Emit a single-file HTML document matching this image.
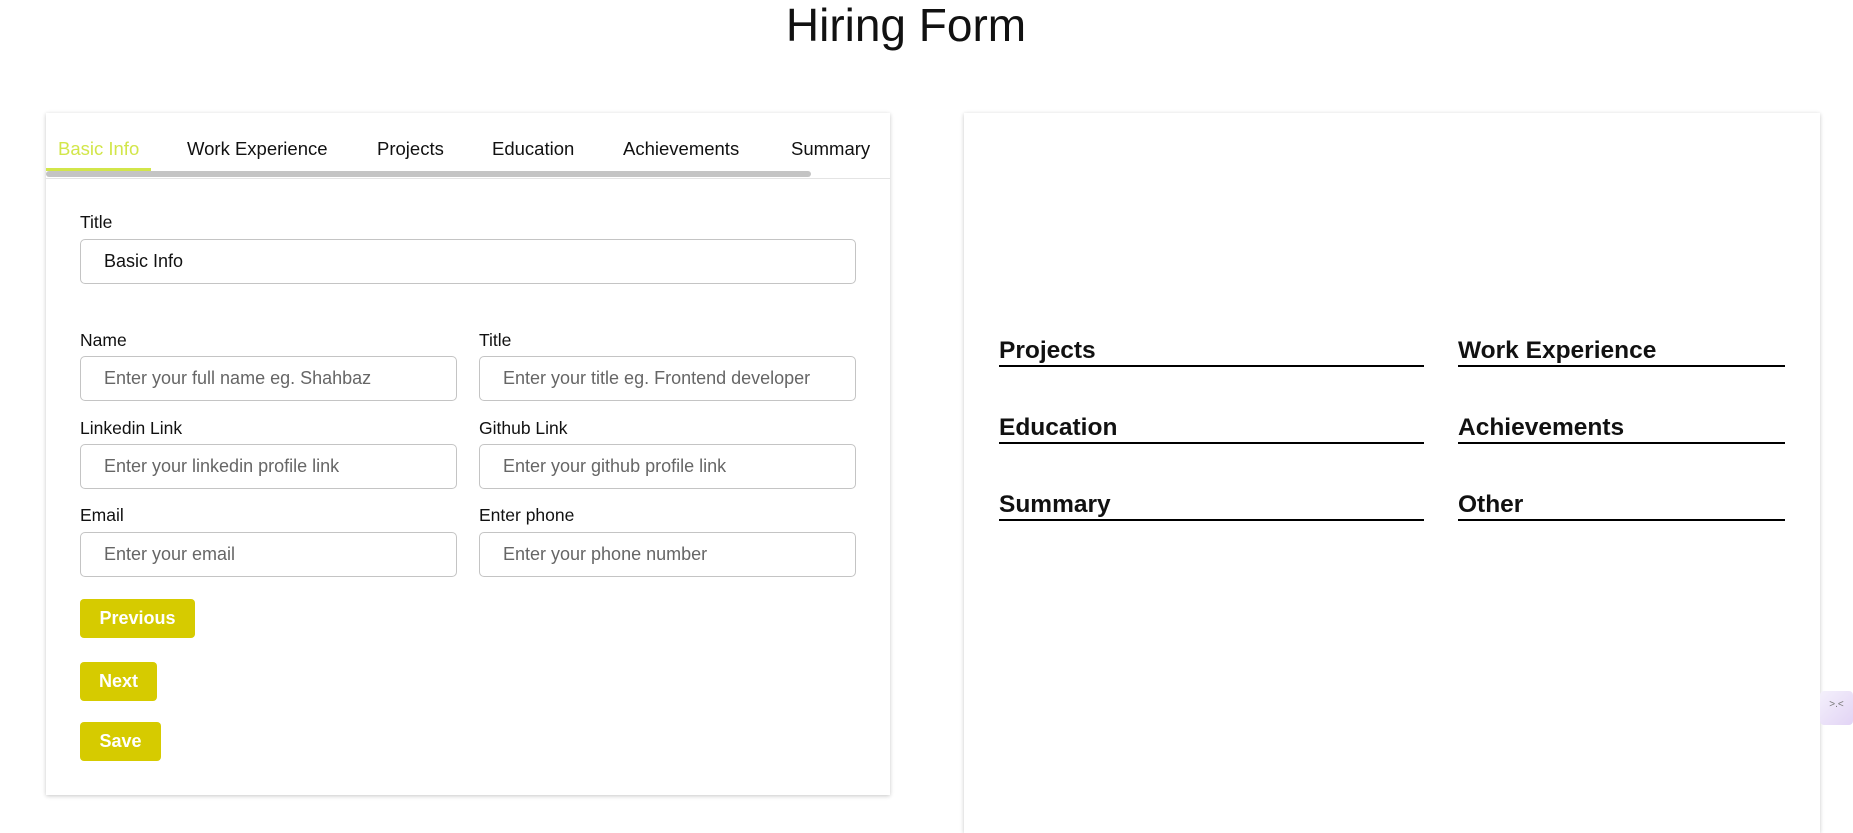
<!DOCTYPE html>
<html><head><meta charset="utf-8"><style>
*{box-sizing:border-box;margin:0;padding:0}
body{width:1853px;height:817px;overflow:hidden;background:#fff;font-family:"Liberation Sans",sans-serif;color:#111;position:relative}
.abs{position:absolute}
h1{position:absolute;left:0;width:1812px;text-align:center;top:-2px;font-weight:400;font-size:46px;color:#111}
.card{position:absolute;background:#fff;box-shadow:0 1px 4px rgba(0,0,0,.22)}
.tab{position:absolute;top:138px;font-size:18.5px;white-space:nowrap}
.lbl{position:absolute;font-size:17.5px;white-space:nowrap}
.inp{position:absolute;border:1px solid #c4c4c4;border-radius:5px;height:45px;font-size:18px;color:#666;padding-left:23px;line-height:43px;white-space:nowrap}
.btn{position:absolute;left:80px;background:#d6cb00;color:#fff;font-weight:bold;font-size:18px;border-radius:4px;text-align:center;line-height:39px;height:39px}
.h{position:absolute;font-weight:bold;font-size:24.5px;border-bottom:2px solid #000;height:42px;line-height:51px}
</style></head><body>
<h1>Hiring Form</h1>
<div class="card" style="left:46px;top:113px;width:844px;height:682px"></div>
<div class="tab" style="left:58px;color:#d2e64a">Basic Info</div>
<div class="tab" style="left:187px">Work Experience</div>
<div class="tab" style="left:377px">Projects</div>
<div class="tab" style="left:492px">Education</div>
<div class="tab" style="left:623px">Achievements</div>
<div class="tab" style="left:791px">Summary</div>
<div class="abs" style="left:46px;top:168px;width:105px;height:3px;background:#d2e64a"></div>
<div class="abs" style="left:46px;top:171px;width:765px;height:6px;background:#c4c4c4;border-radius:3px"></div>
<div class="abs" style="left:46px;top:178px;width:844px;height:1px;background:#e4e4e4"></div>
<div class="lbl" style="left:80px;top:212px">Title</div>
<div class="inp" style="left:80px;top:239px;width:776px;color:#111">Basic Info</div>
<div class="lbl" style="left:80px;top:330px">Name</div>
<div class="lbl" style="left:479px;top:330px">Title</div>
<div class="inp" style="left:80px;top:356px;width:377px">Enter your full name eg. Shahbaz</div>
<div class="inp" style="left:479px;top:356px;width:377px">Enter your title eg. Frontend developer</div>
<div class="lbl" style="left:80px;top:418px">Linkedin Link</div>
<div class="lbl" style="left:479px;top:418px">Github Link</div>
<div class="inp" style="left:80px;top:444px;width:377px">Enter your linkedin profile link</div>
<div class="inp" style="left:479px;top:444px;width:377px">Enter your github profile link</div>
<div class="lbl" style="left:80px;top:505px">Email</div>
<div class="lbl" style="left:479px;top:505px">Enter phone</div>
<div class="inp" style="left:80px;top:532px;width:377px">Enter your email</div>
<div class="inp" style="left:479px;top:532px;width:377px">Enter your phone number</div>
<div class="btn" style="top:599px;width:115px">Previous</div>
<div class="btn" style="top:662px;width:77px">Next</div>
<div class="btn" style="top:722px;width:81px">Save</div>
<div class="card" style="left:964px;top:113px;width:856px;height:720px"></div>
<div class="h" style="left:999px;top:325px;width:425px">Projects</div>
<div class="h" style="left:1458px;top:325px;width:327px">Work Experience</div>
<div class="h" style="left:999px;top:402px;width:425px">Education</div>
<div class="h" style="left:1458px;top:402px;width:327px">Achievements</div>
<div class="h" style="left:999px;top:479px;width:425px">Summary</div>
<div class="h" style="left:1458px;top:479px;width:327px">Other</div>
<div class="abs" style="left:1820px;top:691px;width:33px;height:34px;background:linear-gradient(135deg,#f4f0fb,#e2d4f5);border-radius:4px;font-size:10px;color:#777;text-align:center;line-height:28px">&gt;.&lt;</div>
</body></html>
